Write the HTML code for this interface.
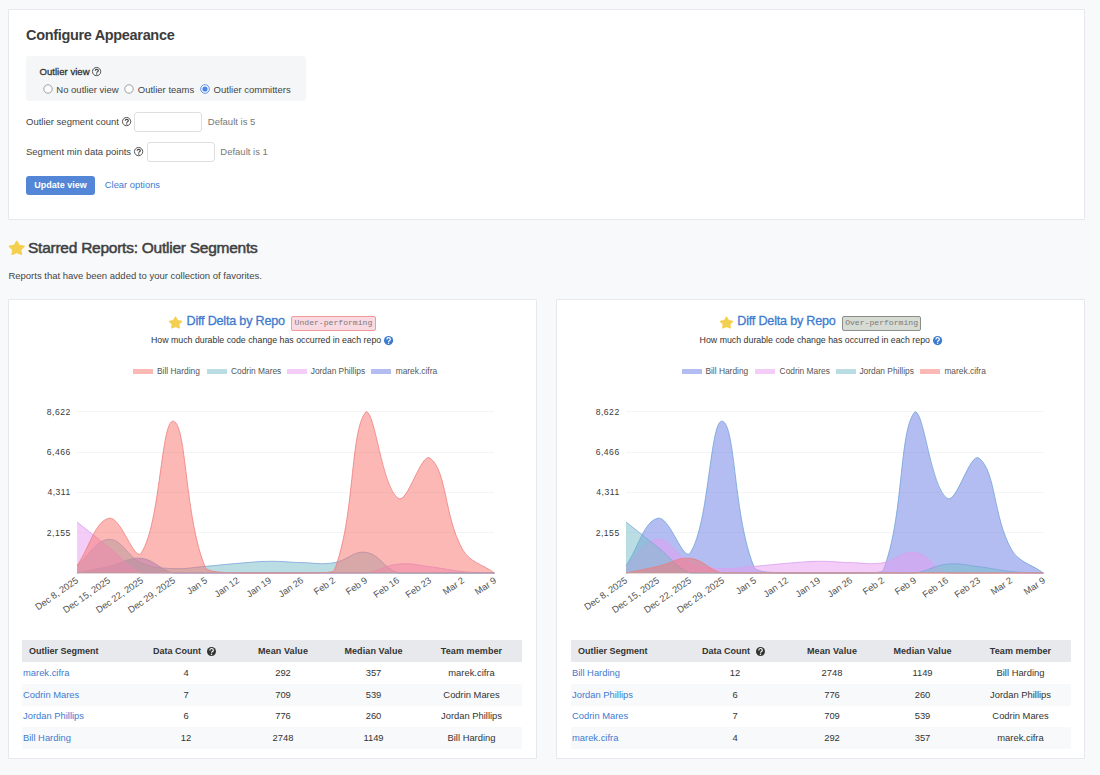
<!DOCTYPE html>
<html><head><meta charset="utf-8"><title>Configure Appearance</title>
<style>
html,body{margin:0;padding:0;}
body{width:1100px;height:775px;overflow:hidden;position:relative;background:#f8f9fb;font-family:"Liberation Sans", sans-serif;}
.t{position:absolute;white-space:nowrap;line-height:1;}
.r{position:absolute;box-sizing:border-box;}
div.r{box-sizing:content-box;}
.xl{font-size:9.3px;color:#505050;letter-spacing:0px;transform-origin:100% 0;transform:translateX(-100%) rotate(-35deg);}
.badge{font-family:"Liberation Mono", monospace;font-size:8.1px;color:#7a7a7a;line-height:12.6px;text-align:center;border-radius:2px;white-space:nowrap;}
</style></head><body>
<div class="r" style="left:8px;top:9px;width:1075px;height:209px;background:#fff;border:1px solid #e7e8eb;border-radius:1px"></div>
<div class="t" style="left:26.00px;top:28.13px;font-size:14.5px;font-weight:700;color:#3c3c3c;letter-spacing:-0.33px;">Configure Appearance</div>
<div class="r" style="left:26px;top:56px;width:280px;height:45px;background:#f5f6f8;border-radius:3px"></div>
<div class="t" style="left:39.50px;top:67.07px;font-size:9.6px;font-weight:400;color:#333;-webkit-text-stroke:0.3px #333;">Outlier view</div>
<svg class="r" style="left:90.90px;top:66.30px" width="11.2" height="11.2" viewBox="-5.6 -5.6 11.2 11.2"><circle cx="0" cy="0" r="4.1499999999999995" fill="none" stroke="#444" stroke-width="0.9"/><path d="M-1.45,-0.9 C-1.45,-2.7 1.75,-2.7 1.75,-0.9 C1.75,0.1 0.15,0.1 0.15,1.2" fill="none" stroke="#444" stroke-width="1.15"/><circle cx="0.15" cy="2.45" r="0.7" fill="#444"/></svg>
<svg class="r" style="left:42.5px;top:83.9px" width="10" height="10" viewBox="-5 -5 10 10"><circle r="4.2" fill="#fff" stroke="#888" stroke-width="0.8"/></svg>
<div class="t" style="left:56.30px;top:84.76px;font-size:9.5px;font-weight:400;color:#444;">No outlier view</div>
<svg class="r" style="left:123.9px;top:83.9px" width="10" height="10" viewBox="-5 -5 10 10"><circle r="4.2" fill="#fff" stroke="#888" stroke-width="0.8"/></svg>
<div class="t" style="left:137.80px;top:84.76px;font-size:9.5px;font-weight:400;color:#444;">Outlier teams</div>
<svg class="r" style="left:199.8px;top:84px" width="10" height="10" viewBox="-5 -5 10 10"><circle r="4.3" fill="#fff" stroke="#4a86e8" stroke-width="0.9"/><circle r="2.6" fill="#4a86e8"/></svg>
<div class="t" style="left:213.60px;top:84.76px;font-size:9.5px;font-weight:400;color:#444;">Outlier committers</div>
<div class="t" style="left:26.00px;top:117.26px;font-size:9.5px;font-weight:400;color:#444;">Outlier segment count</div>
<svg class="r" style="left:121.00px;top:116.20px" width="11.2" height="11.2" viewBox="-5.6 -5.6 11.2 11.2"><circle cx="0" cy="0" r="4.1499999999999995" fill="none" stroke="#444" stroke-width="0.9"/><path d="M-1.45,-0.9 C-1.45,-2.7 1.75,-2.7 1.75,-0.9 C1.75,0.1 0.15,0.1 0.15,1.2" fill="none" stroke="#444" stroke-width="1.15"/><circle cx="0.15" cy="2.45" r="0.7" fill="#444"/></svg>
<div class="r" style="left:133.5px;top:112px;width:66px;height:18px;background:#fff;border:1px solid #dedfe2;border-radius:3px"></div>
<div class="t" style="left:207.80px;top:117.26px;font-size:9.5px;font-weight:400;color:#777;">Default is 5</div>
<div class="t" style="left:26.00px;top:147.26px;font-size:9.5px;font-weight:400;color:#444;">Segment min data points</div>
<svg class="r" style="left:133.10px;top:146.20px" width="11.2" height="11.2" viewBox="-5.6 -5.6 11.2 11.2"><circle cx="0" cy="0" r="4.1499999999999995" fill="none" stroke="#444" stroke-width="0.9"/><path d="M-1.45,-0.9 C-1.45,-2.7 1.75,-2.7 1.75,-0.9 C1.75,0.1 0.15,0.1 0.15,1.2" fill="none" stroke="#444" stroke-width="1.15"/><circle cx="0.15" cy="2.45" r="0.7" fill="#444"/></svg>
<div class="r" style="left:146.5px;top:142.4px;width:66px;height:18px;background:#fff;border:1px solid #dedfe2;border-radius:3px"></div>
<div class="t" style="left:220.30px;top:147.26px;font-size:9.5px;font-weight:400;color:#777;">Default is 1</div>
<div class="r" style="left:26px;top:176px;width:69px;height:18.8px;background:#5386d6;border-radius:3px"></div>
<div class="t" style="left:34.30px;top:180.78px;font-size:9px;font-weight:700;color:#fff;">Update view</div>
<div class="t" style="left:104.80px;top:180.44px;font-size:9.4px;font-weight:400;color:#3d7bd0;">Clear options</div>
<svg class="r" style="left:8.7px;top:240.3px;overflow:visible" width="15.5" height="15.5"><path d="M7.75,1.32 L10.21,5.38 L15.12,6.30 L11.73,9.73 L12.31,14.36 L7.75,12.42 L3.19,14.36 L3.77,9.73 L0.38,6.30 L5.29,5.38Z" fill="#f4d050" stroke="#f4d050" stroke-width="1.40" stroke-linejoin="round"/></svg>
<div class="t" style="left:28.00px;top:240.38px;font-size:15.5px;font-weight:400;color:#404040;letter-spacing:-0.25px;-webkit-text-stroke:0.5px #404040;">Starred Reports: Outlier Segments</div>
<div class="t" style="left:8.40px;top:270.66px;font-size:9.5px;font-weight:400;color:#444;">Reports that have been added to your collection of favorites.</div>
<div class="r" style="left:8px;top:299px;width:527px;height:458px;background:#fff;border:1px solid #e7e8eb;border-radius:1px"></div>
<div class="r" style="left:556px;top:299px;width:527px;height:458px;background:#fff;border:1px solid #e7e8eb;border-radius:1px"></div>
<svg class="r" style="left:168.8px;top:315.5px;overflow:visible" width="13" height="13"><path d="M6.50,1.11 L8.56,4.51 L12.68,5.28 L9.84,8.16 L10.32,12.04 L6.50,10.41 L2.68,12.04 L3.16,8.16 L0.32,5.28 L4.44,4.51Z" fill="#f4d050" stroke="#f4d050" stroke-width="1.17" stroke-linejoin="round"/></svg>
<div class="t" style="left:186.50px;top:314.63px;font-size:12.6px;font-weight:400;color:#3d7bd0;letter-spacing:-0.2px;-webkit-text-stroke:0.3px #3d7bd0;">Diff Delta by Repo</div>
<div class="r badge" style="left:291.2px;top:315.5px;width:82.5px;height:13px;background:#f9d9e2;border:1px solid #f09a9a;">Under-performing</div>
<div class="t" style="left:150.90px;top:335.75px;font-size:8.8px;font-weight:400;color:#333;">How much durable code change has occurred in each repo</div>
<svg class="r" style="left:383.40px;top:334.60px" width="11.2" height="11.2" viewBox="-5.6 -5.6 11.2 11.2"><circle cx="0" cy="0" r="4.6" fill="#3d7bd0"/><path d="M-1.7,-1.1 Q-1.7,-3 0,-3 Q1.8,-3 1.8,-1.3 Q1.8,-0.3 0.7,0.2 Q0,0.5 0,1.3" fill="none" stroke="#fff" stroke-width="1.2"/><circle cx="0" cy="2.7" r="0.75" fill="#fff"/></svg>
<div class="r" style="left:133px;top:369px;width:20px;height:5px;background:rgba(247,113,107,0.5);"></div>
<div class="t" style="left:157.00px;top:366.69px;font-size:8.4px;font-weight:400;color:#555;">Bill Harding</div>
<div class="r" style="left:207px;top:369px;width:20px;height:5px;background:rgba(115,187,199,0.5);"></div>
<div class="t" style="left:231.00px;top:366.69px;font-size:8.4px;font-weight:400;color:#555;">Codrin Mares</div>
<div class="r" style="left:287px;top:369px;width:20px;height:5px;background:rgba(231,155,239,0.5);"></div>
<div class="t" style="left:310.70px;top:366.69px;font-size:8.4px;font-weight:400;color:#555;">Jordan Phillips</div>
<div class="r" style="left:371.3px;top:369px;width:20px;height:5px;background:rgba(103,123,229,0.5);"></div>
<div class="t" style="left:395.70px;top:366.69px;font-size:8.4px;font-weight:400;color:#555;">marek.cifra</div>
<div class="r" style="left:77.1px;top:411.2px;width:417.4px;height:1px;background:#f3f4f5"></div>
<div class="t" style="left:70.80px;top:407.72px;font-size:8.6px;font-weight:400;color:#3a3a3a;letter-spacing:0.5px;transform:translateX(-100%);">8,622</div>
<div class="r" style="left:77.1px;top:451.55px;width:417.4px;height:1px;background:#f3f4f5"></div>
<div class="t" style="left:70.80px;top:448.07px;font-size:8.6px;font-weight:400;color:#3a3a3a;letter-spacing:0.5px;transform:translateX(-100%);">6,466</div>
<div class="r" style="left:77.1px;top:491.9px;width:417.4px;height:1px;background:#f3f4f5"></div>
<div class="t" style="left:70.80px;top:488.42px;font-size:8.6px;font-weight:400;color:#3a3a3a;letter-spacing:0.5px;transform:translateX(-100%);">4,311</div>
<div class="r" style="left:77.1px;top:532.25px;width:417.4px;height:1px;background:#f3f4f5"></div>
<div class="t" style="left:70.80px;top:528.77px;font-size:8.6px;font-weight:400;color:#3a3a3a;letter-spacing:0.5px;transform:translateX(-100%);">2,155</div>
<svg class="r" style="left:0;top:0" width="1100" height="775"><path d="M77.10,573.10 C89.94,570.40 96.42,569.31 109.21,566.36 C122.11,563.39 128.89,557.01 141.32,558.31 C154.58,559.70 159.96,570.00 173.42,573.10 C185.65,573.10 192.69,573.10 205.53,573.10 C218.37,573.10 224.80,573.10 237.64,573.10 C250.48,573.10 256.90,573.10 269.75,573.10 C282.59,573.10 289.01,573.10 301.85,573.10 C314.70,573.10 321.12,573.10 333.96,573.10 C346.80,573.10 353.23,573.10 366.07,573.10 C378.91,573.10 385.33,573.10 398.18,573.10 C411.02,573.10 417.44,573.10 430.28,573.10 C443.13,573.10 449.55,573.10 462.39,573.10 C475.24,573.10 481.66,573.10 494.50,573.10 L494.50,573.1 L77.10,573.1 Z" fill="rgba(103,123,229,0.5)"/><path d="M77.10,573.10 C89.94,570.40 96.42,569.31 109.21,566.36 C122.11,563.39 128.89,557.01 141.32,558.31 C154.58,559.70 159.96,570.00 173.42,573.10 C185.65,573.10 192.69,573.10 205.53,573.10 C218.37,573.10 224.80,573.10 237.64,573.10 C250.48,573.10 256.90,573.10 269.75,573.10 C282.59,573.10 289.01,573.10 301.85,573.10 C314.70,573.10 321.12,573.10 333.96,573.10 C346.80,573.10 353.23,573.10 366.07,573.10 C378.91,573.10 385.33,573.10 398.18,573.10 C411.02,573.10 417.44,573.10 430.28,573.10 C443.13,573.10 449.55,573.10 462.39,573.10 C475.24,573.10 481.66,573.10 494.50,573.10" fill="none" stroke="#6fa3d6" stroke-width="0.8"/><path d="M77.10,565.61 C89.94,555.13 96.11,539.94 109.21,539.40 C121.80,538.89 127.19,556.57 141.32,562.99 C152.87,568.25 160.50,567.93 173.42,568.61 C186.19,569.28 192.70,567.41 205.53,566.36 C218.39,565.31 224.78,564.38 237.64,563.37 C250.47,562.36 256.90,561.46 269.75,561.31 C282.58,561.16 289.01,562.32 301.85,562.62 C314.69,562.92 321.44,564.81 333.96,562.80 C347.13,560.69 354.02,550.39 366.07,552.32 C379.71,554.51 384.21,568.58 398.18,573.10 C409.90,573.10 417.44,573.10 430.28,573.10 C443.13,573.10 449.55,573.10 462.39,573.10 C475.24,573.10 481.66,573.10 494.50,573.10 L494.50,573.1 L77.10,573.1 Z" fill="rgba(115,187,199,0.5)"/><path d="M77.10,565.61 C89.94,555.13 96.11,539.94 109.21,539.40 C121.80,538.89 127.19,556.57 141.32,562.99 C152.87,568.25 160.50,567.93 173.42,568.61 C186.19,569.28 192.70,567.41 205.53,566.36 C218.39,565.31 224.78,564.38 237.64,563.37 C250.47,562.36 256.90,561.46 269.75,561.31 C282.58,561.16 289.01,562.32 301.85,562.62 C314.69,562.92 321.44,564.81 333.96,562.80 C347.13,560.69 354.02,550.39 366.07,552.32 C379.71,554.51 384.21,568.58 398.18,573.10 C409.90,573.10 417.44,573.10 430.28,573.10 C443.13,573.10 449.55,573.10 462.39,573.10 C475.24,573.10 481.66,573.10 494.50,573.10" fill="none" stroke="#7fa5dc" stroke-width="0.8"/><path d="M77.10,522.00 C89.94,532.22 96.36,537.33 109.21,547.55 C122.05,557.77 126.90,567.37 141.32,573.10 C152.59,573.10 160.58,573.10 173.42,573.10 C186.27,573.10 192.69,573.10 205.53,573.10 C218.37,573.10 224.80,573.10 237.64,573.10 C250.48,573.10 256.90,573.10 269.75,573.10 C282.59,573.10 289.01,573.10 301.85,573.10 C314.70,573.10 321.12,573.10 333.96,573.10 C346.80,573.10 353.47,573.10 366.07,573.10 C379.15,571.27 385.11,565.41 398.18,564.11 C410.80,562.86 417.49,565.24 430.28,566.74 C443.18,568.24 449.48,570.32 462.39,571.60 C475.17,572.87 481.66,572.50 494.50,573.10 L494.50,573.1 L77.10,573.1 Z" fill="rgba(231,155,239,0.5)"/><path d="M77.10,522.00 C89.94,532.22 96.36,537.33 109.21,547.55 C122.05,557.77 126.90,567.37 141.32,573.10 C152.59,573.10 160.58,573.10 173.42,573.10 C186.27,573.10 192.69,573.10 205.53,573.10 C218.37,573.10 224.80,573.10 237.64,573.10 C250.48,573.10 256.90,573.10 269.75,573.10 C282.59,573.10 289.01,573.10 301.85,573.10 C314.70,573.10 321.12,573.10 333.96,573.10 C346.80,573.10 353.47,573.10 366.07,573.10 C379.15,571.27 385.11,565.41 398.18,564.11 C410.80,562.86 417.49,565.24 430.28,566.74 C443.18,568.24 449.48,570.32 462.39,571.60 C475.17,572.87 481.66,572.50 494.50,573.10" fill="none" stroke="#d9a0f0" stroke-width="0.8"/><path d="M77.10,565.61 C89.94,546.67 95.14,521.04 109.21,518.25 C120.82,515.95 134.68,562.91 141.32,552.88 C160.36,524.10 161.24,418.37 173.42,421.21 C186.92,424.36 184.42,517.92 205.53,567.86 C210.11,573.10 224.71,572.04 237.64,573.10 C250.40,573.10 256.90,573.10 269.75,573.10 C282.59,573.10 289.02,573.10 301.85,573.10 C314.71,572.73 329.72,573.10 333.96,571.23 C355.41,517.32 349.69,430.29 366.07,411.70 C375.37,411.70 381.67,486.40 398.18,498.35 C407.36,505.00 421.35,451.15 430.28,458.22 C447.04,471.47 444.25,516.67 462.39,549.14 C469.93,562.63 481.66,563.52 494.50,573.10 L494.50,573.1 L77.10,573.1 Z" fill="rgba(247,113,107,0.5)"/><path d="M77.10,565.61 C89.94,546.67 95.14,521.04 109.21,518.25 C120.82,515.95 134.68,562.91 141.32,552.88 C160.36,524.10 161.24,418.37 173.42,421.21 C186.92,424.36 184.42,517.92 205.53,567.86 C210.11,573.10 224.71,572.04 237.64,573.10 C250.40,573.10 256.90,573.10 269.75,573.10 C282.59,573.10 289.02,573.10 301.85,573.10 C314.71,572.73 329.72,573.10 333.96,571.23 C355.41,517.32 349.69,430.29 366.07,411.70 C375.37,411.70 381.67,486.40 398.18,498.35 C407.36,505.00 421.35,451.15 430.28,458.22 C447.04,471.47 444.25,516.67 462.39,549.14 C469.93,562.63 481.66,563.52 494.50,573.10" fill="none" stroke="#ee7d7d" stroke-width="0.8"/><rect x="77.10" y="572.20" width="417.40" height="1.2" fill="#c29a9c"/></svg>
<div class="t xl" style="left:75.30px;top:576.10px;">Dec 8, 2025</div>
<div class="t xl" style="left:107.41px;top:576.10px;">Dec 15, 2025</div>
<div class="t xl" style="left:139.52px;top:576.10px;">Dec 22, 2025</div>
<div class="t xl" style="left:171.62px;top:576.10px;">Dec 29, 2025</div>
<div class="t xl" style="left:203.73px;top:576.10px;">Jan 5</div>
<div class="t xl" style="left:235.84px;top:576.10px;">Jan 12</div>
<div class="t xl" style="left:267.95px;top:576.10px;">Jan 19</div>
<div class="t xl" style="left:300.05px;top:576.10px;">Jan 26</div>
<div class="t xl" style="left:332.16px;top:576.10px;">Feb 2</div>
<div class="t xl" style="left:364.27px;top:576.10px;">Feb 9</div>
<div class="t xl" style="left:396.38px;top:576.10px;">Feb 16</div>
<div class="t xl" style="left:428.48px;top:576.10px;">Feb 23</div>
<div class="t xl" style="left:460.59px;top:576.10px;">Mar 2</div>
<div class="t xl" style="left:492.70px;top:576.10px;">Mar 9</div>
<div class="r" style="left:22px;top:640px;width:500px;height:22px;background:#e8e9ec"></div>
<div class="t" style="left:29.00px;top:646.78px;font-size:9px;font-weight:700;color:#333;">Outlier Segment</div>
<div class="t" style="left:153.10px;top:646.78px;font-size:9px;font-weight:700;color:#333;">Data Count</div>
<svg class="r" style="left:206.10px;top:645.80px" width="11.0" height="11.0" viewBox="-5.5 -5.5 11.0 11.0"><circle cx="0" cy="0" r="4.5" fill="#333"/><path d="M-1.7,-1.1 Q-1.7,-3 0,-3 Q1.8,-3 1.8,-1.3 Q1.8,-0.3 0.7,0.2 Q0,0.5 0,1.3" fill="none" stroke="#fff" stroke-width="1.2"/><circle cx="0" cy="2.7" r="0.75" fill="#fff"/></svg>
<div class="t" style="left:283.00px;top:646.78px;font-size:9px;font-weight:700;color:#333;letter-spacing:0.1px;transform:translateX(-50%);">Mean Value</div>
<div class="t" style="left:373.50px;top:646.78px;font-size:9px;font-weight:700;color:#333;letter-spacing:0.1px;transform:translateX(-50%);">Median Value</div>
<div class="t" style="left:471.50px;top:646.78px;font-size:9px;font-weight:700;color:#333;letter-spacing:0.1px;transform:translateX(-50%);">Team member</div>
<div class="t" style="left:23.00px;top:667.94px;font-size:9.4px;font-weight:400;color:#3d7bd0;">marek.cifra</div>
<div class="t" style="left:186.00px;top:667.94px;font-size:9.4px;font-weight:400;color:#333;transform:translateX(-50%);">4</div>
<div class="t" style="left:283.00px;top:667.94px;font-size:9.4px;font-weight:400;color:#333;transform:translateX(-50%);">292</div>
<div class="t" style="left:373.50px;top:667.94px;font-size:9.4px;font-weight:400;color:#333;transform:translateX(-50%);">357</div>
<div class="t" style="left:471.50px;top:667.94px;font-size:9.4px;font-weight:400;color:#333;transform:translateX(-50%);">marek.cifra</div>
<div class="r" style="left:22px;top:683.75px;width:500px;height:21.75px;background:#f8f9fa"></div>
<div class="t" style="left:23.00px;top:689.69px;font-size:9.4px;font-weight:400;color:#3d7bd0;">Codrin Mares</div>
<div class="t" style="left:186.00px;top:689.69px;font-size:9.4px;font-weight:400;color:#333;transform:translateX(-50%);">7</div>
<div class="t" style="left:283.00px;top:689.69px;font-size:9.4px;font-weight:400;color:#333;transform:translateX(-50%);">709</div>
<div class="t" style="left:373.50px;top:689.69px;font-size:9.4px;font-weight:400;color:#333;transform:translateX(-50%);">539</div>
<div class="t" style="left:471.50px;top:689.69px;font-size:9.4px;font-weight:400;color:#333;transform:translateX(-50%);">Codrin Mares</div>
<div class="t" style="left:23.00px;top:711.44px;font-size:9.4px;font-weight:400;color:#3d7bd0;">Jordan Phillips</div>
<div class="t" style="left:186.00px;top:711.44px;font-size:9.4px;font-weight:400;color:#333;transform:translateX(-50%);">6</div>
<div class="t" style="left:283.00px;top:711.44px;font-size:9.4px;font-weight:400;color:#333;transform:translateX(-50%);">776</div>
<div class="t" style="left:373.50px;top:711.44px;font-size:9.4px;font-weight:400;color:#333;transform:translateX(-50%);">260</div>
<div class="t" style="left:471.50px;top:711.44px;font-size:9.4px;font-weight:400;color:#333;transform:translateX(-50%);">Jordan Phillips</div>
<div class="r" style="left:22px;top:727.25px;width:500px;height:21.75px;background:#f8f9fa"></div>
<div class="t" style="left:23.00px;top:733.19px;font-size:9.4px;font-weight:400;color:#3d7bd0;">Bill Harding</div>
<div class="t" style="left:186.00px;top:733.19px;font-size:9.4px;font-weight:400;color:#333;transform:translateX(-50%);">12</div>
<div class="t" style="left:283.00px;top:733.19px;font-size:9.4px;font-weight:400;color:#333;transform:translateX(-50%);">2748</div>
<div class="t" style="left:373.50px;top:733.19px;font-size:9.4px;font-weight:400;color:#333;transform:translateX(-50%);">1149</div>
<div class="t" style="left:471.50px;top:733.19px;font-size:9.4px;font-weight:400;color:#333;transform:translateX(-50%);">Bill Harding</div>
<svg class="r" style="left:719.7px;top:315.5px;overflow:visible" width="13" height="13"><path d="M6.50,1.11 L8.56,4.51 L12.68,5.28 L9.84,8.16 L10.32,12.04 L6.50,10.41 L2.68,12.04 L3.16,8.16 L0.32,5.28 L4.44,4.51Z" fill="#f4d050" stroke="#f4d050" stroke-width="1.17" stroke-linejoin="round"/></svg>
<div class="t" style="left:737.30px;top:314.63px;font-size:12.6px;font-weight:400;color:#3d7bd0;letter-spacing:-0.2px;-webkit-text-stroke:0.3px #3d7bd0;">Diff Delta by Repo</div>
<div class="r badge" style="left:842.3px;top:315.6px;width:76.6px;height:13px;background:#d6dbd4;border:1px solid #8a8f8a;">Over-performing</div>
<div class="t" style="left:699.60px;top:335.75px;font-size:8.8px;font-weight:400;color:#333;">How much durable code change has occurred in each repo</div>
<svg class="r" style="left:931.70px;top:334.60px" width="11.2" height="11.2" viewBox="-5.6 -5.6 11.2 11.2"><circle cx="0" cy="0" r="4.6" fill="#3d7bd0"/><path d="M-1.7,-1.1 Q-1.7,-3 0,-3 Q1.8,-3 1.8,-1.3 Q1.8,-0.3 0.7,0.2 Q0,0.5 0,1.3" fill="none" stroke="#fff" stroke-width="1.2"/><circle cx="0" cy="2.7" r="0.75" fill="#fff"/></svg>
<div class="r" style="left:681.6px;top:369px;width:20px;height:5px;background:rgba(103,123,229,0.5);"></div>
<div class="t" style="left:705.40px;top:366.69px;font-size:8.4px;font-weight:400;color:#555;">Bill Harding</div>
<div class="r" style="left:755.2px;top:369px;width:20px;height:5px;background:rgba(231,155,239,0.5);"></div>
<div class="t" style="left:779.60px;top:366.69px;font-size:8.4px;font-weight:400;color:#555;">Codrin Mares</div>
<div class="r" style="left:835.6px;top:369px;width:20px;height:5px;background:rgba(115,187,199,0.5);"></div>
<div class="t" style="left:859.40px;top:366.69px;font-size:8.4px;font-weight:400;color:#555;">Jordan Phillips</div>
<div class="r" style="left:920.3px;top:369px;width:20px;height:5px;background:rgba(247,113,107,0.5);"></div>
<div class="t" style="left:944.40px;top:366.69px;font-size:8.4px;font-weight:400;color:#555;">marek.cifra</div>
<div class="r" style="left:626.0px;top:411.2px;width:417.4px;height:1px;background:#f3f4f5"></div>
<div class="t" style="left:619.70px;top:407.72px;font-size:8.6px;font-weight:400;color:#3a3a3a;letter-spacing:0.5px;transform:translateX(-100%);">8,622</div>
<div class="r" style="left:626.0px;top:451.55px;width:417.4px;height:1px;background:#f3f4f5"></div>
<div class="t" style="left:619.70px;top:448.07px;font-size:8.6px;font-weight:400;color:#3a3a3a;letter-spacing:0.5px;transform:translateX(-100%);">6,466</div>
<div class="r" style="left:626.0px;top:491.9px;width:417.4px;height:1px;background:#f3f4f5"></div>
<div class="t" style="left:619.70px;top:488.42px;font-size:8.6px;font-weight:400;color:#3a3a3a;letter-spacing:0.5px;transform:translateX(-100%);">4,311</div>
<div class="r" style="left:626.0px;top:532.25px;width:417.4px;height:1px;background:#f3f4f5"></div>
<div class="t" style="left:619.70px;top:528.77px;font-size:8.6px;font-weight:400;color:#3a3a3a;letter-spacing:0.5px;transform:translateX(-100%);">2,155</div>
<svg class="r" style="left:0;top:0" width="1100" height="775"><path d="M626.00,565.61 C638.84,546.67 644.04,521.04 658.11,518.25 C669.72,515.95 683.58,562.91 690.22,552.88 C709.26,524.10 710.14,418.37 722.32,421.21 C735.82,424.36 733.32,517.92 754.43,567.86 C759.01,573.10 773.61,572.04 786.54,573.10 C799.30,573.10 805.80,573.10 818.65,573.10 C831.49,573.10 837.92,573.10 850.75,573.10 C863.61,572.73 878.62,573.10 882.86,571.23 C904.31,517.32 898.59,430.29 914.97,411.70 C924.27,411.70 930.57,486.40 947.08,498.35 C956.26,505.00 970.25,451.15 979.18,458.22 C995.94,471.47 993.15,516.67 1011.29,549.14 C1018.83,562.63 1030.56,563.52 1043.40,573.10 L1043.40,573.1 L626.00,573.1 Z" fill="rgba(103,123,229,0.5)"/><path d="M626.00,565.61 C638.84,546.67 644.04,521.04 658.11,518.25 C669.72,515.95 683.58,562.91 690.22,552.88 C709.26,524.10 710.14,418.37 722.32,421.21 C735.82,424.36 733.32,517.92 754.43,567.86 C759.01,573.10 773.61,572.04 786.54,573.10 C799.30,573.10 805.80,573.10 818.65,573.10 C831.49,573.10 837.92,573.10 850.75,573.10 C863.61,572.73 878.62,573.10 882.86,571.23 C904.31,517.32 898.59,430.29 914.97,411.70 C924.27,411.70 930.57,486.40 947.08,498.35 C956.26,505.00 970.25,451.15 979.18,458.22 C995.94,471.47 993.15,516.67 1011.29,549.14 C1018.83,562.63 1030.56,563.52 1043.40,573.10" fill="none" stroke="#6fa3d6" stroke-width="0.8"/><path d="M626.00,565.61 C638.84,555.13 645.01,539.94 658.11,539.40 C670.70,538.89 676.09,556.57 690.22,562.99 C701.77,568.25 709.40,567.93 722.32,568.61 C735.09,569.28 741.60,567.41 754.43,566.36 C767.29,565.31 773.68,564.38 786.54,563.37 C799.37,562.36 805.80,561.46 818.65,561.31 C831.48,561.16 837.91,562.32 850.75,562.62 C863.59,562.92 870.34,564.81 882.86,562.80 C896.03,560.69 902.92,550.39 914.97,552.32 C928.61,554.51 933.11,568.58 947.08,573.10 C958.80,573.10 966.34,573.10 979.18,573.10 C992.03,573.10 998.45,573.10 1011.29,573.10 C1024.14,573.10 1030.56,573.10 1043.40,573.10 L1043.40,573.1 L626.00,573.1 Z" fill="rgba(231,155,239,0.5)"/><path d="M626.00,565.61 C638.84,555.13 645.01,539.94 658.11,539.40 C670.70,538.89 676.09,556.57 690.22,562.99 C701.77,568.25 709.40,567.93 722.32,568.61 C735.09,569.28 741.60,567.41 754.43,566.36 C767.29,565.31 773.68,564.38 786.54,563.37 C799.37,562.36 805.80,561.46 818.65,561.31 C831.48,561.16 837.91,562.32 850.75,562.62 C863.59,562.92 870.34,564.81 882.86,562.80 C896.03,560.69 902.92,550.39 914.97,552.32 C928.61,554.51 933.11,568.58 947.08,573.10 C958.80,573.10 966.34,573.10 979.18,573.10 C992.03,573.10 998.45,573.10 1011.29,573.10 C1024.14,573.10 1030.56,573.10 1043.40,573.10" fill="none" stroke="#d9a0f0" stroke-width="0.8"/><path d="M626.00,522.00 C638.84,532.22 645.26,537.33 658.11,547.55 C670.95,557.77 675.80,567.37 690.22,573.10 C701.49,573.10 709.48,573.10 722.32,573.10 C735.17,573.10 741.59,573.10 754.43,573.10 C767.27,573.10 773.70,573.10 786.54,573.10 C799.38,573.10 805.80,573.10 818.65,573.10 C831.49,573.10 837.91,573.10 850.75,573.10 C863.60,573.10 870.02,573.10 882.86,573.10 C895.70,573.10 902.37,573.10 914.97,573.10 C928.05,571.27 934.01,565.41 947.08,564.11 C959.70,562.86 966.39,565.24 979.18,566.74 C992.08,568.24 998.38,570.32 1011.29,571.60 C1024.07,572.87 1030.56,572.50 1043.40,573.10 L1043.40,573.1 L626.00,573.1 Z" fill="rgba(115,187,199,0.5)"/><path d="M626.00,522.00 C638.84,532.22 645.26,537.33 658.11,547.55 C670.95,557.77 675.80,567.37 690.22,573.10 C701.49,573.10 709.48,573.10 722.32,573.10 C735.17,573.10 741.59,573.10 754.43,573.10 C767.27,573.10 773.70,573.10 786.54,573.10 C799.38,573.10 805.80,573.10 818.65,573.10 C831.49,573.10 837.91,573.10 850.75,573.10 C863.60,573.10 870.02,573.10 882.86,573.10 C895.70,573.10 902.37,573.10 914.97,573.10 C928.05,571.27 934.01,565.41 947.08,564.11 C959.70,562.86 966.39,565.24 979.18,566.74 C992.08,568.24 998.38,570.32 1011.29,571.60 C1024.07,572.87 1030.56,572.50 1043.40,573.10" fill="none" stroke="#7fa5dc" stroke-width="0.8"/><path d="M626.00,573.10 C638.84,570.40 645.32,569.31 658.11,566.36 C671.01,563.39 677.79,557.01 690.22,558.31 C703.48,559.70 708.86,570.00 722.32,573.10 C734.55,573.10 741.59,573.10 754.43,573.10 C767.27,573.10 773.70,573.10 786.54,573.10 C799.38,573.10 805.80,573.10 818.65,573.10 C831.49,573.10 837.91,573.10 850.75,573.10 C863.60,573.10 870.02,573.10 882.86,573.10 C895.70,573.10 902.13,573.10 914.97,573.10 C927.81,573.10 934.23,573.10 947.08,573.10 C959.92,573.10 966.34,573.10 979.18,573.10 C992.03,573.10 998.45,573.10 1011.29,573.10 C1024.14,573.10 1030.56,573.10 1043.40,573.10 L1043.40,573.1 L626.00,573.1 Z" fill="rgba(247,113,107,0.5)"/><path d="M626.00,573.10 C638.84,570.40 645.32,569.31 658.11,566.36 C671.01,563.39 677.79,557.01 690.22,558.31 C703.48,559.70 708.86,570.00 722.32,573.10 C734.55,573.10 741.59,573.10 754.43,573.10 C767.27,573.10 773.70,573.10 786.54,573.10 C799.38,573.10 805.80,573.10 818.65,573.10 C831.49,573.10 837.91,573.10 850.75,573.10 C863.60,573.10 870.02,573.10 882.86,573.10 C895.70,573.10 902.13,573.10 914.97,573.10 C927.81,573.10 934.23,573.10 947.08,573.10 C959.92,573.10 966.34,573.10 979.18,573.10 C992.03,573.10 998.45,573.10 1011.29,573.10 C1024.14,573.10 1030.56,573.10 1043.40,573.10" fill="none" stroke="#ee7d7d" stroke-width="0.8"/><rect x="626.00" y="572.20" width="417.40" height="1.2" fill="#c29a9c"/></svg>
<div class="t xl" style="left:624.20px;top:576.10px;">Dec 8, 2025</div>
<div class="t xl" style="left:656.31px;top:576.10px;">Dec 15, 2025</div>
<div class="t xl" style="left:688.42px;top:576.10px;">Dec 22, 2025</div>
<div class="t xl" style="left:720.52px;top:576.10px;">Dec 29, 2025</div>
<div class="t xl" style="left:752.63px;top:576.10px;">Jan 5</div>
<div class="t xl" style="left:784.74px;top:576.10px;">Jan 12</div>
<div class="t xl" style="left:816.85px;top:576.10px;">Jan 19</div>
<div class="t xl" style="left:848.95px;top:576.10px;">Jan 26</div>
<div class="t xl" style="left:881.06px;top:576.10px;">Feb 2</div>
<div class="t xl" style="left:913.17px;top:576.10px;">Feb 9</div>
<div class="t xl" style="left:945.28px;top:576.10px;">Feb 16</div>
<div class="t xl" style="left:977.38px;top:576.10px;">Feb 23</div>
<div class="t xl" style="left:1009.49px;top:576.10px;">Mar 2</div>
<div class="t xl" style="left:1041.60px;top:576.10px;">Mar 9</div>
<div class="r" style="left:571px;top:640px;width:500px;height:22px;background:#e8e9ec"></div>
<div class="t" style="left:578.00px;top:646.78px;font-size:9px;font-weight:700;color:#333;">Outlier Segment</div>
<div class="t" style="left:702.10px;top:646.78px;font-size:9px;font-weight:700;color:#333;">Data Count</div>
<svg class="r" style="left:755.10px;top:645.80px" width="11.0" height="11.0" viewBox="-5.5 -5.5 11.0 11.0"><circle cx="0" cy="0" r="4.5" fill="#333"/><path d="M-1.7,-1.1 Q-1.7,-3 0,-3 Q1.8,-3 1.8,-1.3 Q1.8,-0.3 0.7,0.2 Q0,0.5 0,1.3" fill="none" stroke="#fff" stroke-width="1.2"/><circle cx="0" cy="2.7" r="0.75" fill="#fff"/></svg>
<div class="t" style="left:832.00px;top:646.78px;font-size:9px;font-weight:700;color:#333;letter-spacing:0.1px;transform:translateX(-50%);">Mean Value</div>
<div class="t" style="left:922.50px;top:646.78px;font-size:9px;font-weight:700;color:#333;letter-spacing:0.1px;transform:translateX(-50%);">Median Value</div>
<div class="t" style="left:1020.50px;top:646.78px;font-size:9px;font-weight:700;color:#333;letter-spacing:0.1px;transform:translateX(-50%);">Team member</div>
<div class="t" style="left:572.00px;top:667.94px;font-size:9.4px;font-weight:400;color:#3d7bd0;">Bill Harding</div>
<div class="t" style="left:735.00px;top:667.94px;font-size:9.4px;font-weight:400;color:#333;transform:translateX(-50%);">12</div>
<div class="t" style="left:832.00px;top:667.94px;font-size:9.4px;font-weight:400;color:#333;transform:translateX(-50%);">2748</div>
<div class="t" style="left:922.50px;top:667.94px;font-size:9.4px;font-weight:400;color:#333;transform:translateX(-50%);">1149</div>
<div class="t" style="left:1020.50px;top:667.94px;font-size:9.4px;font-weight:400;color:#333;transform:translateX(-50%);">Bill Harding</div>
<div class="r" style="left:571px;top:683.75px;width:500px;height:21.75px;background:#f8f9fa"></div>
<div class="t" style="left:572.00px;top:689.69px;font-size:9.4px;font-weight:400;color:#3d7bd0;">Jordan Phillips</div>
<div class="t" style="left:735.00px;top:689.69px;font-size:9.4px;font-weight:400;color:#333;transform:translateX(-50%);">6</div>
<div class="t" style="left:832.00px;top:689.69px;font-size:9.4px;font-weight:400;color:#333;transform:translateX(-50%);">776</div>
<div class="t" style="left:922.50px;top:689.69px;font-size:9.4px;font-weight:400;color:#333;transform:translateX(-50%);">260</div>
<div class="t" style="left:1020.50px;top:689.69px;font-size:9.4px;font-weight:400;color:#333;transform:translateX(-50%);">Jordan Phillips</div>
<div class="t" style="left:572.00px;top:711.44px;font-size:9.4px;font-weight:400;color:#3d7bd0;">Codrin Mares</div>
<div class="t" style="left:735.00px;top:711.44px;font-size:9.4px;font-weight:400;color:#333;transform:translateX(-50%);">7</div>
<div class="t" style="left:832.00px;top:711.44px;font-size:9.4px;font-weight:400;color:#333;transform:translateX(-50%);">709</div>
<div class="t" style="left:922.50px;top:711.44px;font-size:9.4px;font-weight:400;color:#333;transform:translateX(-50%);">539</div>
<div class="t" style="left:1020.50px;top:711.44px;font-size:9.4px;font-weight:400;color:#333;transform:translateX(-50%);">Codrin Mares</div>
<div class="r" style="left:571px;top:727.25px;width:500px;height:21.75px;background:#f8f9fa"></div>
<div class="t" style="left:572.00px;top:733.19px;font-size:9.4px;font-weight:400;color:#3d7bd0;">marek.cifra</div>
<div class="t" style="left:735.00px;top:733.19px;font-size:9.4px;font-weight:400;color:#333;transform:translateX(-50%);">4</div>
<div class="t" style="left:832.00px;top:733.19px;font-size:9.4px;font-weight:400;color:#333;transform:translateX(-50%);">292</div>
<div class="t" style="left:922.50px;top:733.19px;font-size:9.4px;font-weight:400;color:#333;transform:translateX(-50%);">357</div>
<div class="t" style="left:1020.50px;top:733.19px;font-size:9.4px;font-weight:400;color:#333;transform:translateX(-50%);">marek.cifra</div>

</body></html>
